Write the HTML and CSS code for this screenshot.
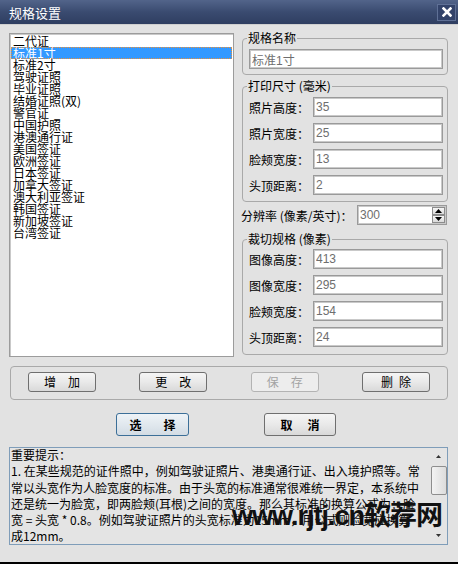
FILE: index.html
```html
<!DOCTYPE html>
<html lang="zh-CN">
<head>
  <meta charset="UTF-8">
  <title>规格设置</title>
  <link rel="stylesheet" href="styles.css">
</head>
<body>
  <div class="window">
    <div class="titlebar">
      <span class="title">规格设置</span>
      <span class="close">
        <svg width="10" height="10" viewBox="0 0 10 10"><path d="M1.5 1.5 L8.5 8.5 M8.5 1.5 L1.5 8.5" stroke="#fff" stroke-width="2.6" stroke-linecap="square"/></svg>
      </span>
    </div>

    <div class="main">
      <ul class="spec-list">
        <li>二代证</li>
        <li class="selected">标准1寸</li>
        <li>标准2寸</li>
        <li>驾驶证照</li>
        <li>毕业证照</li>
        <li>结婚证照(双)</li>
        <li>警官证</li>
        <li>中国护照</li>
        <li>港澳通行证</li>
        <li>美国签证</li>
        <li>欧洲签证</li>
        <li>日本签证</li>
        <li>加拿大签证</li>
        <li>澳大利亚签证</li>
        <li>韩国签证</li>
        <li>新加坡签证</li>
        <li>台湾签证</li>
      </ul>

      <div class="side">
        <fieldset class="group">
          <legend>规格名称</legend>
          <input class="field" value="标准1寸" readonly>
        </fieldset>

        <fieldset class="group">
          <legend>打印尺寸 (毫米)</legend>
          <div class="rows">
            <div class="row"><label>照片高度：</label><input class="field" value="35" readonly></div>
            <div class="row"><label>照片宽度：</label><input class="field" value="25" readonly></div>
            <div class="row"><label>脸颊宽度：</label><input class="field" value="13" readonly></div>
            <div class="row"><label>头顶距离：</label><input class="field" value="2" readonly></div>
          </div>
        </fieldset>

        <div class="dpi-row">
          <label>分辨率 (像素/英寸)：</label>
          <div class="spin">
            <input class="field" value="300" readonly>
            <span class="spin-btns">
              <span class="spin-btn"><svg width="7" height="4" viewBox="0 0 7 4"><path d="M3.5 0 L7 4 L0 4 Z" fill="#000"/></svg></span>
              <span class="spin-btn"><svg width="7" height="4" viewBox="0 0 7 4"><path d="M0 0 L7 0 L3.5 4 Z" fill="#000"/></svg></span>
            </span>
          </div>
        </div>

        <fieldset class="group crop">
          <legend>裁切规格 (像素)</legend>
          <div class="rows">
            <div class="row"><label>图像高度：</label><input class="field" value="413" readonly></div>
            <div class="row"><label>图像宽度：</label><input class="field" value="295" readonly></div>
            <div class="row"><label>脸颊宽度：</label><input class="field" value="154" readonly></div>
            <div class="row"><label>头顶距离：</label><input class="field" value="24" readonly></div>
          </div>
        </fieldset>
      </div>
    </div>

    <div class="btn-group">
      <button class="btn"><span>增</span><span>加</span></button>
      <button class="btn"><span>更</span><span>改</span></button>
      <button class="btn" disabled><span>保</span><span>存</span></button>
      <button class="btn tight"><span>删</span><span>除</span></button>
    </div>

    <div class="actions">
      <button class="btn big default wide-gap"><span>选</span><span>择</span></button>
      <button class="btn big"><span>取</span><span>消</span></button>
    </div>

    <div class="notes">
      <div class="notes-text">
        重要提示：<br>
        1. 在某些规范的证件照中，例如驾驶证照片、港奥通行证、出入境护照等。常<br>
        常以头宽作为人脸宽度的标准。由于头宽的标准通常很难统一界定，本系统中<br>
        还是统一为脸宽，即两脸颊(耳根)之间的宽度。那么其标准的换算公式为：脸<br>
        宽 = 头宽 * 0.8。例如驾驶证照片的头宽标准为15mm，用公式则脸宽应换算<br>
        成12mm。
      </div>
      <div class="scrollbar">
        <span class="arrow"><svg width="5" height="3" viewBox="0 0 5 3"><path d="M2.5 0 L5 3 L0 3 Z" fill="#333"/></svg></span>
        <span class="thumb"><span class="grip"></span></span>
        <span class="track"></span>
        <span class="arrow"><svg width="5" height="3" viewBox="0 0 5 3"><path d="M0 0 L5 0 L2.5 3 Z" fill="#333"/></svg></span>
      </div>
      <div class="watermark">www.rjtj.cn软荐网</div>
    </div>
  </div>
</body>
</html>
```

FILE: styles.css
```css
* {
  box-sizing: border-box;
}

body {
  margin: 0;
  font-family: "Noto Sans CJK SC", "Liberation Sans", sans-serif;
  font-size: 12px;
  color: #000;
  background: #e2e2e2;
}

.window {
  width: 458px;
  height: 564px;
  background: #e2e2e2;
  border-bottom: 2px solid #000;
}

/* title bar */
.titlebar {
  height: 25px;
  display: flex;
  align-items: center;
  justify-content: space-between;
  padding: 0 2px 0 9px;
  background: linear-gradient(to bottom, #52648a 0%, #3a4b70 50%, #2f3e61 100%);
  border-bottom: 1px solid #cfcfcf;
}

.title {
  color: #fff;
  font-size: 13px;
  line-height: 13px;
}

.close {
  width: 19px;
  height: 17px;
  display: flex;
  align-items: center;
  justify-content: center;
  background: #33436a;
  border: 1px solid #5f7096;
}

/* list + settings */
.main {
  display: flex;
  gap: 7px;
  padding: 8px 10px 0 9px;
}

.spec-list {
  list-style: none;
  margin: 0;
  padding: 1px 0 0;
  width: 225px;
  height: 324px;
  background: #fff;
  border: 1px solid #9c9c9c;
  box-shadow: inset 1px 1px 0 #c9c9c9;
}

.spec-list li {
  height: 12px;
  line-height: 12px;
  margin: 0 1px;
  padding-left: 2px;
  white-space: nowrap;
}

.spec-list li.selected {
  background: #3399ff;
  color: #fff;
  outline: 1px dotted #e8903a;
  outline-offset: -1px;
}

.side {
  flex: 1;
  margin-top: -1px;
}

.group {
  margin: 0 0 0 1px;
  padding: 5px 4px 5px 6px;
  border: 1px solid #a9a9a9;
  border-radius: 4px;
}

.group + .group {
  margin-top: 5px;
}

.group legend {
  padding: 0 1px;
  margin-left: -2px;
  line-height: 12px;
  font-size: 12px;
}

.group .rows {
  padding-bottom: 1px;
}

.group.crop {
  margin-top: 8px;
  padding-top: 4px;
}

.group.crop .rows {
  padding-bottom: 2px;
}

.rows {
  display: flex;
  flex-direction: column;
  gap: 6px;
}

.row {
  display: flex;
  align-items: center;
}

.row label {
  width: 64px;
  font-size: 12px;
}

.field {
  display: block;
  width: 100%;
  height: 20px;
  margin: 0;
  padding: 0 2px;
  font-family: "Liberation Sans", "Noto Sans CJK SC", sans-serif;
  font-size: 12px;
  color: #6e6e6e;
  background: #fff;
  border: 1px solid #9a9a9a;
  box-shadow: inset 0 0 0 1px #c9c9c9;
  outline: none;
}

.row .field {
  flex: 1;
}

.dpi-row {
  display: flex;
  align-items: center;
  margin-top: 3px;
}

.dpi-row label {
  width: 116px;
  white-space: nowrap;
}

.spin {
  position: relative;
  width: 90px;
}

.spin-btns {
  position: absolute;
  right: 2px;
  top: 2px;
  display: flex;
  flex-direction: column;
}

.spin-btn {
  width: 13px;
  height: 8px;
  display: flex;
  align-items: center;
  justify-content: center;
  background: linear-gradient(to bottom, #f6f6f6, #dadada);
  border: 1px solid #8c8c8c;
}

/* buttons */
.btn-group {
  display: flex;
  justify-content: space-between;
  margin: 9px 10px 0 10px;
  padding: 5px 17px 7px;
  border: 1px solid #a9a9a9;
  border-radius: 4px;
}

.btn {
  width: 68px;
  height: 20px;
  display: flex;
  align-items: center;
  justify-content: center;
  gap: 12px;
  padding: 0;
  font-family: "Noto Sans CJK SC", sans-serif;
  font-size: 12px;
  line-height: 12px;
  color: #000;
  background: linear-gradient(to bottom, #f5f5f5 0%, #e9e9e9 50%, #d9d9d9 100%);
  border: 1px solid #6f6f6f;
  border-radius: 3px;
}

.btn.tight {
  gap: 6px;
}

.btn:disabled {
  color: #a3a3a3;
  background: #ededed;
  border-color: #b3b3b3;
}

.actions {
  display: flex;
  justify-content: center;
  gap: 75px;
  margin-top: 13px;
  padding-right: 6px;
}

.btn.big {
  width: 72px;
  height: 23px;
  gap: 15px;
  font-weight: bold;
}

.btn.default {
  width: 73px;
  gap: 22px;
  border-color: #3c6f98;
  background: linear-gradient(to bottom, #eef3f7 0%, #e1e8ee 50%, #d3dce4 100%);
}

/* notes */
.notes {
  position: relative;
  display: flex;
  height: 98px;
  margin: 11px 10px 0 9px;
  border: 1px solid #7f9db9;
  background: #e4e4e4;
  overflow: hidden;
}

.notes-text {
  flex: 1;
  margin-top: -1px;
  padding: 0 0 0 1px;
  font-size: 12px;
  line-height: 16.3px;
  white-space: nowrap;
}

.scrollbar {
  width: 17px;
  display: flex;
  flex-direction: column;
  align-items: center;
}

.arrow {
  height: 17px;
  display: flex;
  align-items: center;
  justify-content: center;
}

.thumb {
  width: 16px;
  height: 29px;
  margin-top: 1px;
  display: flex;
  align-items: center;
  justify-content: center;
  background: linear-gradient(to right, #f3f3f3, #dcdcdc);
  border: 1px solid #8e8e8e;
  border-radius: 2px;
}

.grip {
  width: 4px;
  height: 6px;
  background-image: radial-gradient(#9a9a9a 40%, transparent 45%);
  background-size: 2px 2px;
}

.track {
  flex: 1;
}

.watermark {
  position: absolute;
  left: 222px;
  top: 53px;
  font-family: "Liberation Sans", "Noto Sans CJK SC", sans-serif;
  font-size: 27px;
  font-weight: bold;
  line-height: 30px;
  color: #111;
  white-space: nowrap;
  letter-spacing: -1px;
}
```
